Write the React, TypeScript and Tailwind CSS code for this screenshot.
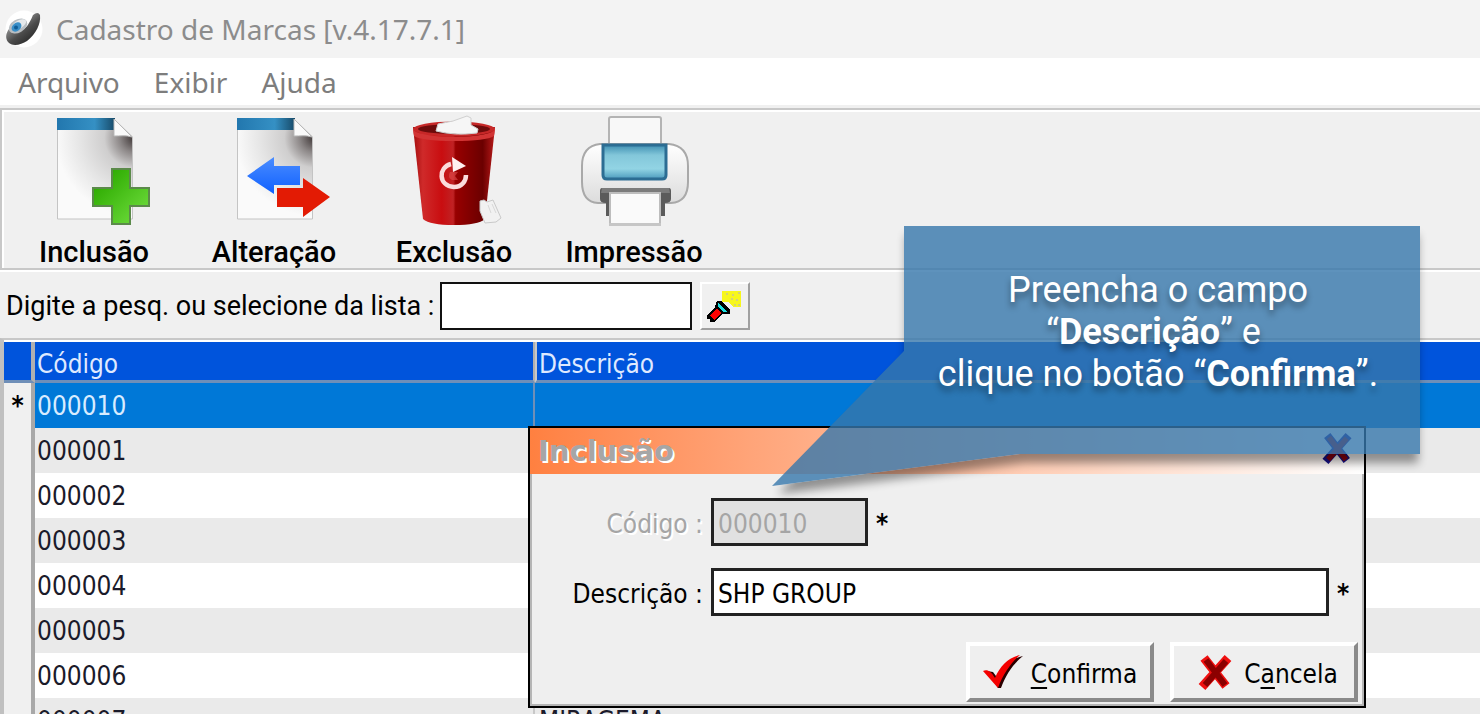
import type { ReactNode } from 'react'

const MENU = ['Arquivo', 'Exibir', 'Ajuda']

const ROWS = [
  { code: '000010', desc: '', selected: true },
  { code: '000001', desc: '' },
  { code: '000002', desc: '' },
  { code: '000003', desc: '' },
  { code: '000004', desc: '' },
  { code: '000005', desc: '' },
  { code: '000006', desc: '' },
  { code: '000007', desc: 'MIRAGEMA' },
]

function AppLogo() {
  return (
    <svg className="w-10 h-10" viewBox="0 0 40 40" aria-hidden="true">
      <defs>
        <linearGradient id="logo" x1="0.300" y1="0.300" x2="0.800" y2="0.900">
          <stop offset="0" stopColor="#8a8a8a" />
          <stop offset="0.450" stopColor="#4c4c4c" />
          <stop offset="1" stopColor="#262626" />
        </linearGradient>
      </defs>
      <circle cx="20" cy="20" r="18.500" fill="#fff" />
      <path d="M29 6q5-4 7 0c1 9-4 19-13 26-6 4-15 6-19 1-3-4-2-9 1-13l8 2c6 0 10-4 12-8 2-3 3-6 4-8z" fill="url(#logo)" />
      <ellipse cx="14" cy="17" rx="10" ry="6.500" fill="#b9bec2" transform="rotate(-30 14 17)" />
      <ellipse cx="15" cy="15.500" rx="8" ry="4" fill="#e6e9eb" transform="rotate(-30 15 15.500)" />
      <ellipse cx="12.500" cy="18" rx="5.500" ry="4" fill="#3a8fc8" transform="rotate(-40 12.500 18)" />
      <circle cx="12" cy="18.500" r="2" fill="#0f5c96" />
    </svg>
  )
}

function Sheet() {
  return (
    <>
      <defs>
        <radialGradient id="sheet" gradientUnits="userSpaceOnUse" cx="104" cy="26" r="78">
          <stop offset="0" stopColor="#3f3737" />
          <stop offset="0.180" stopColor="#8b8686" />
          <stop offset="0.380" stopColor="#cfcece" />
          <stop offset="0.700" stopColor="#e6e6e6" />
          <stop offset="1" stopColor="#fafafa" />
        </radialGradient>
        <linearGradient id="strip" x1="0" y1="0" x2="1" y2="0">
          <stop offset="0" stopColor="#2277ae" />
          <stop offset="0.650" stopColor="#3590c4" />
          <stop offset="1" stopColor="#174a68" />
        </linearGradient>
      </defs>
      <path d="M27.500 7H84l18.500 18v82h-75z" fill="url(#sheet)" stroke="#c4c4c4" />
      <path d="M27 6h58v12H27z" fill="url(#strip)" />
      <path d="M84 7l18 18c-6-2-12-1-18-1z" fill="#fafafa" stroke="#b9b9b9" />
    </>
  )
}

function AddIcon() {
  return (
    <svg className="w-32 h-[116px] shrink-0" viewBox="0 0 128 116" aria-hidden="true">
      <Sheet />
      <defs>
        <linearGradient id="plus" x1="0" y1="0" x2="1" y2="1">
          <stop offset="0.200" stopColor="#31ae04" />
          <stop offset="0.900" stopColor="#6ddb3b" />
        </linearGradient>
      </defs>
      <path d="M82 57h18v19h19v18h-19v18H82V94H63V76h19z" fill="url(#plus)" stroke="#5b8a4a" strokeWidth="2" />
    </svg>
  )
}

function EditIcon() {
  return (
    <svg className="w-32 h-[116px] shrink-0" viewBox="0 0 128 116" aria-hidden="true">
      <Sheet />
      <defs>
        <linearGradient id="blueArrow" x1="0" y1="0" x2="0" y2="1">
          <stop offset="0" stopColor="#4b8dff" />
          <stop offset="1" stopColor="#0f60ff" />
        </linearGradient>
      </defs>
      <path d="M37 64l27-19v9h26v19H64v9z" fill="url(#blueArrow)" />
      <path d="M67 76h26V66l27 19-27 20V95H67z" fill="#e31b04" />
    </svg>
  )
}

function TrashIcon() {
  return (
    <svg className="w-32 h-[116px] shrink-0" viewBox="0 0 128 116" aria-hidden="true">
      <defs>
        <linearGradient id="bin" x1="0" y1="0" x2="1" y2="0">
          <stop offset="0" stopColor="#a30d0d" />
          <stop offset="0.120" stopColor="#cf2a2a" />
          <stop offset="0.350" stopColor="#c90d10" />
          <stop offset="0.490" stopColor="#c02224" />
          <stop offset="0.520" stopColor="#980000" />
          <stop offset="0.850" stopColor="#6b0000" />
          <stop offset="1" stopColor="#b81a1a" />
        </linearGradient>
      </defs>
      <path d="M23 15h82l-10 92q-7 6-31 6t-31-6z" fill="url(#bin)" />
      <ellipse cx="64" cy="17" rx="41" ry="7.500" fill="#c62828" />
      <ellipse cx="64" cy="17" rx="36" ry="5" fill="#6d0b0b" />
      <path d="M46 19l2-7 15-3 14-5 4 2v7l7 4-1 4q-22 3-41-2z" fill="#f6f6f6" stroke="#d0d0d0" />
      <path d="M23 17q3 7 41 8 38-1 41-8l-1 7q-8 5-40 5t-40-5z" fill="#d23434" />
      <path d="M61 52c-13 3-13 22 3 23 8 0 12-6 12-12" fill="none" stroke="#fbdcdc" strokeWidth="4.500" />
      <path d="M62 45l14 9-13 6z" fill="#fff0f0" />
      <path d="M60 60q-3 5 2 8h6l-3-4 3-4z" fill="#e04c4c" opacity="0.600" />
      <path d="M90 89l4-1 3 2 6-2 8 18-5 4-11 1-5-12z" fill="#f1f1f1" stroke="#c9c9c9" />
      <path d="M98 93l3 8M102 92l4 9" stroke="#d8d8d8" />
    </svg>
  )
}

function PrintIcon() {
  return (
    <svg className="w-32 h-[116px] shrink-0" viewBox="0 0 128 116" aria-hidden="true">
      <defs>
        <linearGradient id="printer" x1="0" y1="0" x2="0" y2="1">
          <stop offset="0" stopColor="#fff" />
          <stop offset="1" stopColor="#dcdcdc" />
        </linearGradient>
        <linearGradient id="glass" x1="0" y1="0" x2="0" y2="1">
          <stop offset="0" stopColor="#3f8fb2" />
          <stop offset="0.300" stopColor="#83c7da" />
          <stop offset="0.700" stopColor="#92d4e4" />
          <stop offset="1" stopColor="#4c9bbd" />
        </linearGradient>
      </defs>
      <rect x="39" y="5" width="52" height="36" rx="2" fill="#f8f8f8" stroke="#b4b4b4" strokeWidth="2" />
      <path d="M30 32h69q19 2 19 22v16q0 20-17 21H28Q12 90 12 70V54q0-20 18-22z" fill="url(#printer)" stroke="#a9a9a9" strokeWidth="2" />
      <path d="M33 33h63v30q0 4-4 4H37q-4 0-4-4z" fill="url(#glass)" stroke="#2c6d93" strokeWidth="3" />
      <path d="M32 76h67q2 0 2 3v8q0 4-6 4v13H36V91q-6 0-6-4v-8q0-3 2-3z" fill="#5b5b5b" />
      <path d="M32 76h67l1 5H31z" fill="#7b7b7b" />
      <path d="M40 81h50v32H40z" fill="#fafafa" stroke="#bdbdbd" strokeWidth="2" />
      <path d="M39 111h52v3H39z" fill="#c6c6c6" />
    </svg>
  )
}

function FlashlightIcon() {
  return (
    <svg className="w-9 h-9" viewBox="0 0 36 36" shapeRendering="crispEdges" aria-hidden="true">
      <path d="M15 3h19v16h-8l-4-5h-7z" fill="#f7f71c" />
      <path d="M19 5h2v2h-2zm6 1h2v2h-2zm6-2h2v2h-2zM29 11h2v2h-2zm-5-1h2v2h-2zm7 6h2v2h-2zm-4 0h2v2h-2z" fill="#d2d27a" />
      <path d="M0 27l8-8 7 7-8 8H3v-3H0z" fill="#000" />
      <path d="M3 27l7-6 4 4-7 7z" fill="#f00" />
      <path d="M10 13h4l9 9v4h-8l-7-7z" fill="#000" />
      <path d="M11 15l10 9h-5l-5-5z" fill="#19dfe0" />
    </svg>
  )
}

function CheckIcon() {
  return (
    <svg className="w-10 h-9" viewBox="0 0 40 36" aria-hidden="true">
      <path d="M4 17l6 1 6 8C20 14 28 4 40 2 31 9 23 20 18 34h-3z" fill="#2a0000" />
      <path d="M0 17c4-2 8 0 12 7C17 12 25 4 37 1 28 9 20 20 15 34z" fill="#f40000" />
    </svg>
  )
}

function CrossIcon({ className, back, front }: { className: string; back: string; front: string }) {
  return (
    <svg className={className} viewBox="0 0 34 36" fill="none" aria-hidden="true">
      <path d="M6 4l22 28M30 4L4 33" stroke={back} strokeWidth="9" />
      <path d="M8 6l19 25M28 7L7 31" stroke={front} strokeWidth="6" />
    </svg>
  )
}

function ToolButton({ label, children }: { label: string; children: ReactNode }) {
  return (
    <button className="w-[180px] flex flex-col items-center">
      {children}
      <span className="pt-2 text-[29px] leading-8 font-medium">{label}</span>
    </button>
  )
}

function DialogButton({ children }: { children: ReactNode }) {
  return (
    <button className="w-[188px] h-[60px] flex items-center justify-center gap-2 bg-[#efefef] border-t-4 border-l-4 border-t-white border-l-white border-r-4 border-b-4 border-r-[#8a8a8a] border-b-[#8a8a8a]">
      {children}
    </button>
  )
}

function Dialog() {
  return (
    <section
      role="dialog"
      aria-label="Inclusão"
      className="absolute left-[528px] top-[426px] w-[838px] h-[282px] flex flex-col border-2 border-black bg-[#efefef] shadow-[inset_0_0_0_2px_#b5b5b5]"
    >
      <header className="h-[46px] flex items-center justify-between pl-2 pr-[10px] bg-linear-to-r from-[#ff8040] to-white">
        <h2 className="font-['DejaVu_Sans',sans-serif] text-[29px] leading-8 font-bold text-[#a6a6a6] [text-shadow:2px_2px_0_#fff]">
          Inclusão
        </h2>
        <button aria-label="Fechar" className="self-start pt-1">
          <CrossIcon className="w-[34px] h-8" back="#17108a" front="#8b0010" />
        </button>
      </header>
      <form className="flex-1 flex flex-col pt-6" onSubmit={e => e.preventDefault()}>
        <div className="flex items-center h-12">
          <label htmlFor="codigo" className="w-[173px] pt-1 text-right text-[#a5a5a5] [text-shadow:2px_2px_0_#fff]">
            Código :
          </label>
          <input
            id="codigo"
            disabled
            defaultValue="000010"
            className="ml-2 w-[157px] h-12 px-1 pt-1 border-3 border-[#222] bg-[#e1e1e1] text-[#a5a5a5]"
          />
          <span className="ml-2 pt-1 font-bold">*</span>
        </div>
        <div className="mt-[22px] flex items-center h-12">
          <label htmlFor="descricao" className="w-[173px] pt-1 text-right">
            Descrição :
          </label>
          <input
            id="descricao"
            defaultValue="SHP GROUP"
            className="ml-2 w-[618px] h-12 px-1 pt-1 border-3 border-[#222] bg-white"
          />
          <span className="ml-2 pt-1 font-bold">*</span>
        </div>
        <div className="mt-[26px] flex justify-end gap-4 pr-[6px]">
          <DialogButton>
            <CheckIcon />
            <span className="pt-1">
              <u className="underline-offset-4">C</u>onfirma
            </span>
          </DialogButton>
          <DialogButton>
            <CrossIcon className="w-[34px] h-9 ml-2 mr-1" back="#f01010" front="#8b0000" />
            <span className="pt-1">
              C<u className="underline-offset-4">a</u>ncela
            </span>
          </DialogButton>
        </div>
      </form>
    </section>
  )
}

// speech balloon whose tail points at the dialog fields
function Callout() {
  return (
    <aside className="absolute left-[904px] top-[226px] w-[516px] h-[228px]">
      <svg className="absolute -left-[132px] top-0 w-[668px] h-[290px]" viewBox="0 0 668 290" aria-hidden="true">
        <defs>
          <filter id="soft" x="-10%" y="-10%" width="120%" height="130%">
            <feGaussianBlur stdDeviation="5" />
          </filter>
          <mask id="outside" maskUnits="userSpaceOnUse" x="0" y="0" width="668" height="290">
            <path d="M0 0h668v290H0z" fill="#fff" />
            <path d="M132 0h516v228H248L0 260l132-135z" fill="#000" />
          </mask>
        </defs>
        <g mask="url(#outside)">
          <path d="M134 9h512v228H252L6 268l128-134z" fill="#000" opacity="0.400" filter="url(#soft)" />
        </g>
        <path d="M132 0h516v228H248L0 260l132-135z" fill="#3677ab" fillOpacity="0.800" />
      </svg>
      <p className="relative pt-[43px] pr-2 text-center font-[Roboto,sans-serif] text-[36px] leading-[42px] text-white [text-shadow:0_5px_6px_rgba(0,0,0,0.4)]">
        Preencha o campo
        <br />
        “<b>Descrição</b>” e&nbsp;
        <br />
        clique no botão “<b>Confirma</b>”.
      </p>
    </aside>
  )
}

export default function App() {
  return (
    <div className="relative h-screen flex flex-col overflow-hidden bg-[#f0f0f0] text-black font-['DejaVu_Sans_Condensed','DejaVu_Sans',sans-serif] text-[26px] leading-8">
      <header className="h-[58px] shrink-0 flex items-center gap-3 pl-1 bg-[#f3f3f3]">
        <AppLogo />
        <h1 className="font-['Noto_Sans',sans-serif] text-[28px] text-[#8c8c8c]">Cadastro de Marcas [v.4.17.7.1]</h1>
      </header>

      <nav className="h-[47px] shrink-0 flex items-center gap-[34px] pl-[18px] bg-white font-['Noto_Sans',sans-serif] text-[28px] text-[#7d7d7d]">
        {MENU.map(m => (
          <button key={m}>{m}</button>
        ))}
      </nav>

      <div className="mt-[3px] h-[162px] shrink-0 flex border-2 border-r-0 border-[#c8c8c8] shadow-[inset_2px_2px_0_#fff,0_2px_0_#fff] pt-[2px] pl-[2px] font-[Roboto,sans-serif]">
        <ToolButton label="Inclusão"><AddIcon /></ToolButton>
        <ToolButton label="Alteração"><EditIcon /></ToolButton>
        <ToolButton label="Exclusão"><TrashIcon /></ToolButton>
        <ToolButton label="Impressão"><PrintIcon /></ToolButton>
      </div>

      <form className="h-[68px] shrink-0 flex items-center pl-[6px] pt-1" onSubmit={e => e.preventDefault()}>
        <label htmlFor="pesquisa" className="w-[434px] font-[Roboto,sans-serif] text-[27px] whitespace-nowrap">
          Digite a pesq. ou selecione da lista :
        </label>
        <input id="pesquisa" className="w-[252px] h-12 px-2 border-2 border-[#111] bg-white" />
        <button
          aria-label="Pesquisar"
          className="ml-2 w-[50px] h-12 flex items-center justify-center border-2 border-t-white border-l-white border-r-[#a0a0a0] border-b-[#a0a0a0]"
        >
          <FlashlightIcon />
        </button>
      </form>

      <main className="flex-1 min-h-0 overflow-hidden border-t-2 border-l-4 border-t-[#c8c8c8] border-l-[#c0c0c0] pt-[2px] bg-white">
        <table className="w-full table-fixed border-separate border-spacing-0">
          <colgroup>
            <col className="w-[31px]" />
            <col className="w-[500px]" />
            <col />
          </colgroup>
          <thead>
            <tr className="h-[41px] bg-[#0054dc] text-left text-[#dfe9ff]">
              <th className="p-0 border-r-4 border-b-3 border-r-[#b0b0b0] border-b-[#6f8fb8]" />
              <th className="p-0 pl-[2px] pt-[6px] font-normal border-r-2 border-b-3 border-r-[#b0b0b0] border-b-[#6f8fb8]">Código</th>
              <th className="p-0 pl-[2px] pt-[6px] font-normal border-l-2 border-b-3 border-l-[#c8c8c8] border-b-[#6f8fb8]">Descrição</th>
            </tr>
          </thead>
          <tbody>
            {ROWS.map(r => (
              <tr
                key={r.code}
                className={`h-[45px] ${r.selected ? 'bg-[#0078d7] text-[#d8ecff]' : 'odd:bg-white even:bg-[#eaeaea] text-[#1a1a2a]'}`}
              >
                <td className="p-0 text-center text-black font-bold bg-[#f0f0f0] border-r-4 border-r-[#a8a8a8]">
                  {r.selected ? '*' : ''}
                </td>
                <td className={`p-0 pl-[2px] ${r.selected ? 'border-r-2 border-r-[#6f8fb8]' : 'border-r-2 border-r-[#c8c8c8]'}`}>{r.code}</td>
                <td className="p-0 pl-1">{r.desc}</td>
              </tr>
            ))}
          </tbody>
        </table>
      </main>

      <Dialog />
      <Callout />
    </div>
  )
}
